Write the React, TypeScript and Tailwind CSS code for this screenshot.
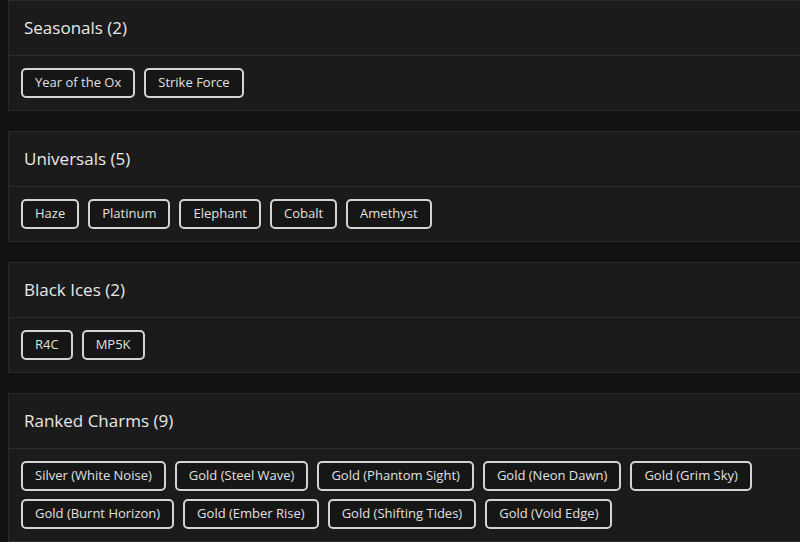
const groups: { title: string; items: string[] }[] = [
  { title: 'Seasonals (2)', items: ['Year of the Ox', 'Strike Force'] },
  { title: 'Universals (5)', items: ['Haze', 'Platinum', 'Elephant', 'Cobalt', 'Amethyst'] },
  { title: 'Black Ices (2)', items: ['R4C', 'MP5K'] },
  {
    title: 'Ranked Charms (9)',
    items: [
      'Silver (White Noise)',
      'Gold (Steel Wave)',
      'Gold (Phantom Sight)',
      'Gold (Neon Dawn)',
      'Gold (Grim Sky)',
      'Gold (Burnt Horizon)',
      'Gold (Ember Rise)',
      'Gold (Shifting Tides)',
      'Gold (Void Edge)',
    ],
  },
];

function Chip({ label }: { label: string }) {
  return (
    <span className="flex h-[30px] items-center rounded-[5px] border-2 border-[#d4d4d4] bg-[#161616] px-[12px] text-[13px] text-[#e0e0e0]">
      {label}
    </span>
  );
}

export default function App() {
  return (
    <div className="h-[542px] w-[800px] overflow-hidden bg-[#121212] font-['Open_Sans',sans-serif]">
      <div className="flex flex-col gap-[20px]">
        {groups.map((g) => (
          <section key={g.title} className="ml-2 w-[820px] border border-[#2a2a2a] bg-[#1b1b1b]">
            <div className="flex h-[55px] items-center border-b border-[#2c2c2c] px-[15px] text-[17px] font-medium text-[#e8e8e8]">
              {g.title}
            </div>
            <div className="flex flex-wrap gap-x-[9px] gap-y-[8px] pb-[12px] pl-[12px] pr-[60px] pt-[12px]">
              {g.items.map((it) => (
                <Chip key={it} label={it} />
              ))}
            </div>
          </section>
        ))}
      </div>
    </div>
  );
}
